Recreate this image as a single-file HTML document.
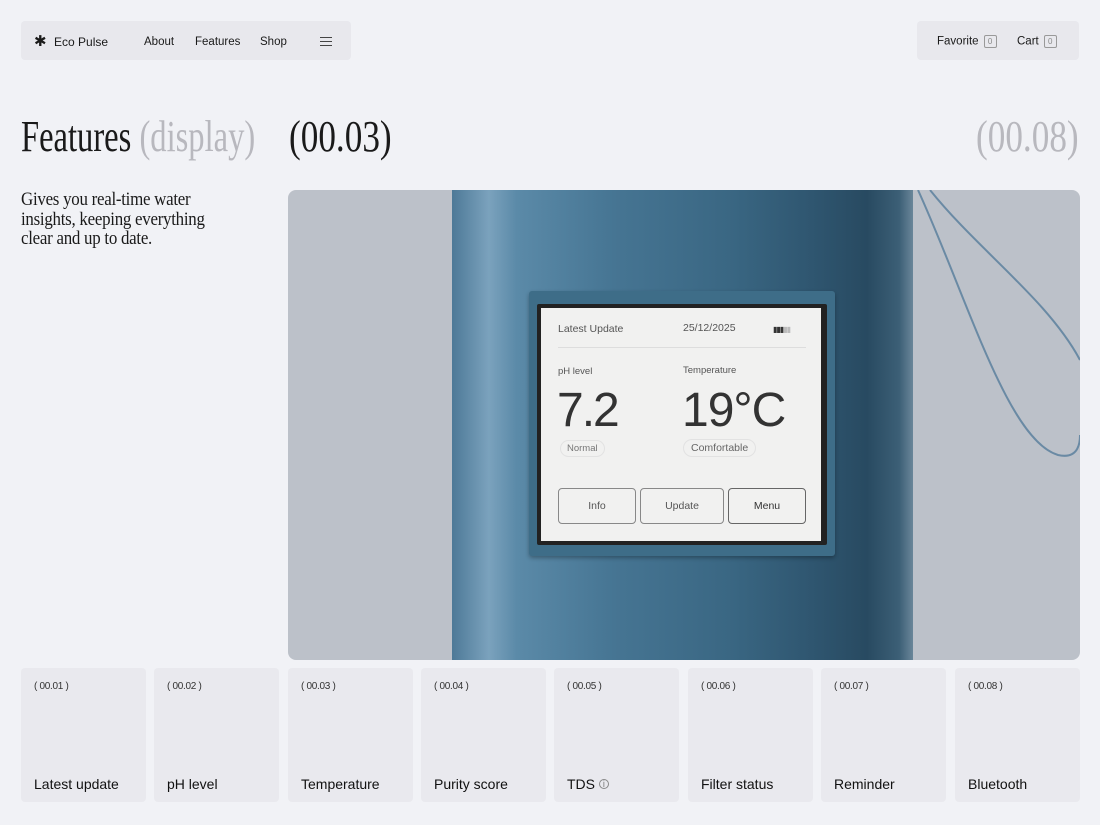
<!DOCTYPE html>
<html><head><meta charset="utf-8"><style>
*{margin:0;padding:0;box-sizing:border-box}
body{width:1100px;height:825px;background:#f1f2f6;font-family:"Liberation Sans",sans-serif;color:#1a1a1a;position:relative;overflow:hidden}
.abs{position:absolute}
.nav{left:21px;top:21px;width:330px;height:39px;background:#e8e8ed;border-radius:4px;font-size:11.5px}
.nav span{position:absolute;top:14px}
.right{left:917px;top:21px;width:162px;height:39px;background:#e8e8ed;border-radius:4px;font-size:11.5px}
.badge{display:inline-block;width:13px;height:13px;border:1px solid #999;border-radius:2px;font-size:8px;color:#888;text-align:center;line-height:11px;vertical-align:middle;margin-left:5px}
.serif{font-family:"Liberation Serif",serif;display:inline-block;transform-origin:left top;white-space:nowrap}
.card{position:absolute;top:668px;width:125px;height:134px;background:#e9e9ee;border-radius:4px}
.card .n{position:absolute;left:13px;top:13px;font-size:10px;color:#333;letter-spacing:-.3px}
.card .t{position:absolute;left:13px;top:108px;font-size:14px;color:#111}
.scr{font-size:10.5px;color:#555}
.btn{position:absolute;top:488px;height:36px;border:1.3px solid #888;border-radius:4px;font-size:10.5px;color:#555;text-align:center;line-height:34px}
</style></head><body>
<div class="abs nav">
<span style="left:13px;top:11px;font-size:15px">✱</span>
<span style="left:33px;font-size:12px">Eco Pulse</span>
<span style="left:123px;top:15px">About</span>
<span style="left:174px;top:15px">Features</span>
<span style="left:239px;top:15px">Shop</span>
<span style="left:299px;top:16px;width:12px;height:9px;border-top:1px solid #444;border-bottom:1px solid #444"></span>
<span style="left:299px;top:20px;width:12px;height:1px;background:#444"></span>
</div>
<div class="abs right">
<span class="abs" style="left:20px;top:14px">Favorite<span class="badge">0</span></span>
<span class="abs" style="left:100px;top:14px">Cart<span class="badge">0</span></span>
</div>
<div class="abs" style="left:21px;top:111px"><span class="serif" style="font-size:44px;transform:scaleX(.74)">Features <span style="color:#b8b8be">(display)</span></span></div>
<div class="abs" style="left:289px;top:111px"><span class="serif" style="font-size:44px;transform:scaleX(.8)">(00.03)</span></div>
<div class="abs" style="left:976px;top:111px"><span class="serif" style="font-size:44px;transform:scaleX(.8);color:#b8b8be">(00.08)</span></div>
<div class="abs" style="left:21px;top:190px"><span class="serif" style="font-size:19px;line-height:19.5px;transform:scaleX(.89);letter-spacing:-.3px">Gives you real-time water<br>insights, keeping everything<br>clear and up to date.</span></div>

<div class="abs" style="left:288px;top:190px;width:792px;height:470px;background:#bcc1c9;border-radius:8px;overflow:hidden">
 <div class="abs" style="left:164px;top:0;width:461px;height:470px;background:linear-gradient(90deg,#4d7997 0%,#7ba2bd 8%,#5b8aa8 14%,#467593 35%,#3a6783 60%,#2f5670 78%,#284a61 90%,#3c5f76 97%,#6a8699 100%)"></div>
 <svg class="abs" style="left:620px;top:0" width="172" height="270"><path d="M10 0 C60 110 100 250 150 265 C172 270 172 250 172 245 M22 0 C70 60 140 110 172 170" fill="none" stroke="#6a8aa4" stroke-width="2"/></svg>
 <div class="abs" style="left:241px;top:101px;width:306px;height:265px;background:#3e6d88;border-radius:3px;box-shadow:0 2px 4px rgba(0,0,0,.3)"></div>
 <div class="abs" style="left:249px;top:114px;width:290px;height:241px;background:#222;border-radius:2px"></div>
 <div class="abs" style="left:253px;top:118px;width:280px;height:233px;background:#f1f1f0"></div>
</div>
<div class="abs scr" style="left:558px;top:323px">Latest Update</div>
<div class="abs scr" style="left:683px;top:322px">25/12/2025</div>
<div class="abs" style="left:773px;top:325px;font-size:8px;letter-spacing:-1px;color:#333">▮▮▮<span style="color:#bbb">▮▮</span></div>
<div class="abs" style="left:558px;top:347px;width:248px;height:1px;background:#ddd"></div>
<div class="abs scr" style="left:558px;top:366px;font-size:9.5px">pH level</div>
<div class="abs scr" style="left:683px;top:365px;font-size:9.5px">Temperature</div>
<div class="abs" style="left:557px;top:383px;font-size:48px;color:#333;letter-spacing:-2px">7.2</div>
<div class="abs" style="left:682px;top:383px;font-size:48px;color:#333;letter-spacing:-1px">19°C</div>
<div class="abs scr" style="left:560px;top:440px;border:1px solid #e2e2e2;border-radius:9px;padding:2px 6px;font-size:9.5px;color:#777">Normal</div>
<div class="abs scr" style="left:683px;top:439px;border:1px solid #e2e2e2;border-radius:9px;padding:2px 7px;font-size:10.5px;color:#666">Comfortable</div>
<div class="btn" style="left:558px;width:78px">Info</div>
<div class="btn" style="left:640px;width:84px">Update</div>
<div class="btn" style="left:728px;width:78px;color:#333;border-color:#666">Menu</div>

<div class="card" style="left:21px"><div class="n">( 00.01 )</div><div class="t">Latest update</div></div>
<div class="card" style="left:154px"><div class="n">( 00.02 )</div><div class="t">pH level</div></div>
<div class="card" style="left:288px"><div class="n">( 00.03 )</div><div class="t">Temperature</div></div>
<div class="card" style="left:421px"><div class="n">( 00.04 )</div><div class="t">Purity score</div></div>
<div class="card" style="left:554px"><div class="n">( 00.05 )</div><div class="t">TDS <span style="font-size:9px;color:#777;border:1px solid #888;border-radius:50%;display:inline-block;width:10px;height:10px;line-height:8px;text-align:center;vertical-align:2px">i</span></div></div>
<div class="card" style="left:688px"><div class="n">( 00.06 )</div><div class="t">Filter status</div></div>
<div class="card" style="left:821px"><div class="n">( 00.07 )</div><div class="t">Reminder</div></div>
<div class="card" style="left:955px"><div class="n">( 00.08 )</div><div class="t">Bluetooth</div></div>
</body></html>
